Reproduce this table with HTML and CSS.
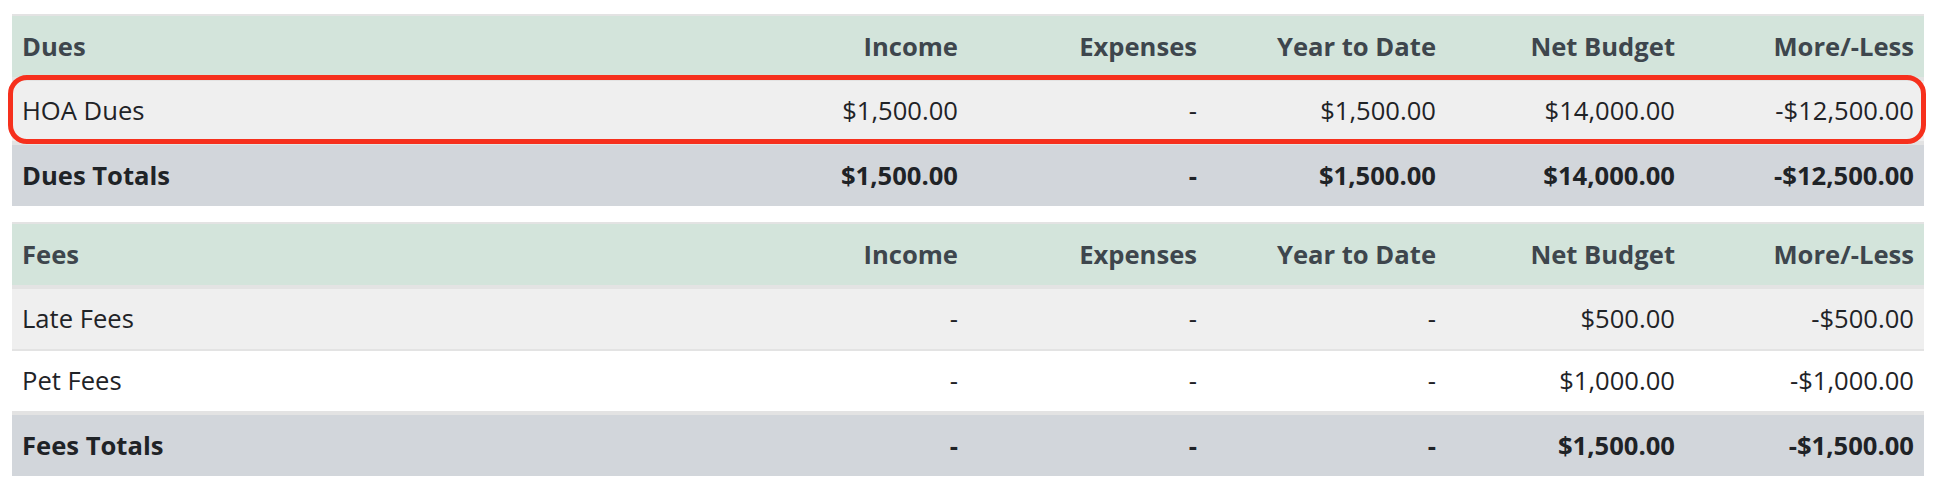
FILE: index.html
```html
<!DOCTYPE html>
<html lang="en">
<head>
<meta charset="utf-8">
<title>Budget</title>
<link rel="stylesheet" href="styles.css">
</head>
<body>
<div class="page">
  <div class="section">
    <table class="budget">
      <colgroup>
        <col class="c-name"><col class="c-num"><col class="c-num"><col class="c-num"><col class="c-num"><col class="c-num">
      </colgroup>
      <thead>
        <tr class="head">
          <th class="name">Dues</th><th>Income</th><th>Expenses</th><th>Year to Date</th><th>Net Budget</th><th>More/-Less</th>
        </tr>
      </thead>
      <tbody>
        <tr class="row odd">
          <td class="name">HOA Dues</td><td>$1,500.00</td><td>-</td><td>$1,500.00</td><td>$14,000.00</td><td>-$12,500.00</td>
        </tr>
        <tr class="total">
          <td class="name">Dues Totals</td><td>$1,500.00</td><td>-</td><td>$1,500.00</td><td>$14,000.00</td><td>-$12,500.00</td>
        </tr>
      </tbody>
    </table>
    <div class="highlight"></div>
  </div>
  <div class="section">
    <table class="budget">
      <colgroup>
        <col class="c-name"><col class="c-num"><col class="c-num"><col class="c-num"><col class="c-num"><col class="c-num">
      </colgroup>
      <thead>
        <tr class="head">
          <th class="name">Fees</th><th>Income</th><th>Expenses</th><th>Year to Date</th><th>Net Budget</th><th>More/-Less</th>
        </tr>
      </thead>
      <tbody>
        <tr class="row odd">
          <td class="name">Late Fees</td><td>-</td><td>-</td><td>-</td><td>$500.00</td><td>-$500.00</td>
        </tr>
        <tr class="row even">
          <td class="name">Pet Fees</td><td>-</td><td>-</td><td>-</td><td>$1,000.00</td><td>-$1,000.00</td>
        </tr>
        <tr class="total">
          <td class="name">Fees Totals</td><td>-</td><td>-</td><td>-</td><td>$1,500.00</td><td>-$1,500.00</td>
        </tr>
      </tbody>
    </table>
  </div>
</div>
</body>
</html>
```

FILE: styles.css
```css
html, body {
  margin: 0;
  padding: 0;
  background: #ffffff;
}

.page {
  padding: 14px 14px 0 12px;
  font-family: "Open Sans", "Noto Sans", sans-serif;
  font-size: 25.6px;
  color: #1f2327;
  display: flex;
  flex-direction: column;
  gap: 16px;
}

.section {
  position: relative;
}

.budget {
  width: 100%;
  table-layout: fixed;
  border-collapse: separate;
  border-spacing: 0;
  border-top: 2px solid #e3e3e3;
}

.c-name { width: 37.5%; }
.c-num { width: 12.5%; }

.budget th,
.budget td {
  padding: 0 10px;
  text-align: right;
  white-space: nowrap;
  vertical-align: middle;
}

.budget .name {
  text-align: left;
}

.head th {
  line-height: 61px;
  background: #d3e4db;
  color: #3e464d;
  font-weight: 700;
  border-bottom: 4px solid #e3e3e3;
}

.row td {
  line-height: 60px;
  font-weight: 400;
  border-bottom: 2px solid #e3e3e3;
}

.row.odd td { background: #efefef; }
.row.even td { background: #ffffff; }

.total td {
  line-height: 61px;
  background: #d2d6db;
  font-weight: 700;
  color: #1f2327;
  border-top: 2px solid #e3e3e3;
}

.highlight {
  position: absolute;
  left: -4px;
  top: 61px;
  width: 1918px;
  height: 69px;
  box-sizing: border-box;
  border: 5px solid #f6301d;
  border-radius: 19px;
  pointer-events: none;
}
```
